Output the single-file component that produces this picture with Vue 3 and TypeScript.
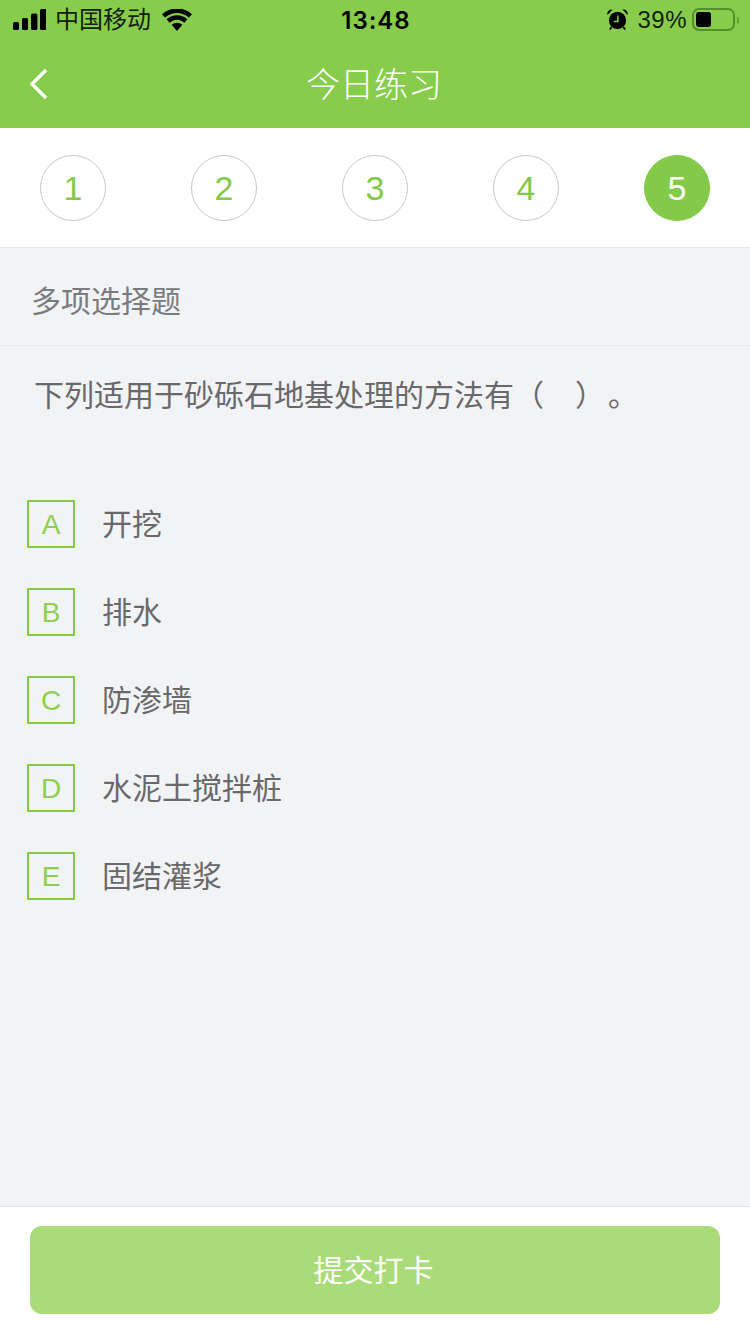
<script setup lang="ts">
const steps: number[] = [1, 2, 3, 4, 5]
const options = [
  { key: 'A', text: '开挖' },
  { key: 'B', text: '排水' },
  { key: 'C', text: '防渗墙' },
  { key: 'D', text: '水泥土搅拌桩' },
  { key: 'E', text: '固结灌浆' },
]
</script>

<template>
  <div class="page">
    <header class="top">
      <div class="status">
        <div class="status-left">
          <svg class="signal" width="33" height="21" viewBox="0 0 33 21">
            <rect x="0" y="13" width="6" height="8" rx="1.5" />
            <rect x="9" y="9" width="6" height="12" rx="1.5" />
            <rect x="18" y="4.5" width="6.4" height="16.5" rx="1.5" />
            <rect x="27" y="0" width="6.4" height="21" rx="1.5" />
          </svg>
          <span class="carrier">中国移动</span>
          <svg class="wifi" width="30" height="22" viewBox="0 0 30 22">
            <path d="M15 22 9.6 15.8a8 8 0 0 1 10.8 0Z" />
            <path d="M7.7 13.7 4.6 10.3a15.2 15.2 0 0 1 20.8 0l-3.1 3.4a10.8 10.8 0 0 0-14.6 0Z" />
            <path d="M3.2 8.7 0 5.3a22 22 0 0 1 30 0l-3.2 3.4a17.4 17.4 0 0 0-23.6 0Z" />
          </svg>
        </div>
        <span class="time">13:48</span>
        <div class="status-right">
          <svg class="alarm" width="21" height="21" viewBox="0 0 21 21">
            <circle cx="10.5" cy="11.4" r="8.6" fill="#000" />
            <path d="M.4 6C-.2 2.4 2 .2 5.6.6Z" fill="#000" />
            <path d="M20.6 6C21.2 2.4 19 .2 15.4.6Z" fill="#000" />
            <path d="M4.6 18 2.8 20.6M16.4 18l1.8 2.6" stroke="#000" stroke-width="1.8" fill="none" />
            <path d="M10.9 6.4V12.4H6.6" stroke="#87cd4b" stroke-width="1.5" fill="none" />
          </svg>
          <span class="pct">39%</span>
          <div class="battery"><i class="level"></i></div>
          <i class="cap"></i>
        </div>
      </div>
      <div class="nav">
        <svg class="back" width="20" height="32" viewBox="0 0 20 32">
          <path d="M17 2 3 16l14 14" fill="none" stroke="#fff" stroke-width="3.4" />
        </svg>
        <span class="title">今日练习</span>
      </div>
    </header>

    <section class="steps">
      <div v-for="n in steps" :key="n" class="step" :class="{ active: n === 5 }">{{ n }}</div>
    </section>

    <main class="body">
      <div class="type">多项选择题</div>
      <div class="question">下列适用于砂砾石地基处理的方法有（<span class="blank"></span><span class="close">）</span>。</div>
      <ul class="options">
        <li v-for="o in options" :key="o.key" class="option">
          <span class="letter">{{ o.key }}</span>
          <span class="label">{{ o.text }}</span>
        </li>
      </ul>
    </main>

    <footer class="foot">
      <button class="submit" type="button">提交打卡</button>
    </footer>
  </div>
</template>

<style>
html, body { margin: 0; padding: 0; }
</style>

<style scoped>
.page {
  width: 750px;
  height: 1334px;
  display: flex;
  flex-direction: column;
  background: #f2f3f5;
  font-family: "Liberation Sans", "Noto Sans CJK SC", sans-serif;
  overflow: hidden;
}
.top { height: 128px; background: #87cd4b; flex: none; }
.status {
  height: 40px;
  padding: 0 11px 0 13px;
  display: grid;
  grid-template-columns: 1fr auto 1fr;
  align-items: center;
  color: #000;
}
.status-left { display: flex; align-items: center; }
.signal { fill: #000; margin-top: -1px; }
.carrier { margin-left: 9px; font-size: 24px; line-height: 40px; color: #14210c; }
.wifi { fill: #000; margin-left: 11px; margin-top: -1px; }
.time { font-family: Inter, "Liberation Sans", sans-serif; font-size: 24px; font-weight: 600; letter-spacing: 1px; }
.status-right { display: flex; align-items: center; justify-content: flex-end; }
.alarm { margin-right: 9px; margin-top: -2px; }
.pct { font-size: 24px; letter-spacing: 0.5px; color: #14210c; margin-right: 5px; }
.battery {
  box-sizing: border-box;
  width: 43px;
  height: 23px;
  border: 2px solid #55902b;
  border-radius: 7px;
  padding: 2px;
  margin-top: -1px;
}
.level { display: block; width: 15px; height: 15px; background: #000; border-radius: 3px; }
.cap { display: block; width: 2px; height: 7px; margin-left: 2px; background: #5f9a35; border-radius: 0 2px 2px 0; }
.nav {
  height: 88px;
  position: relative;
  display: flex;
  align-items: center;
  justify-content: center;
}
.back { position: absolute; left: 29px; top: 28px; }
.title { font-size: 34px; color: #fff; font-weight: 300; margin: -3px 2px 0 0; }
.steps {
  flex: none;
  height: 119px;
  padding: 0 40px;
  background: #fff;
  border-bottom: 1px solid #e6e6e6;
  display: flex;
  align-items: center;
  justify-content: space-between;
}
.step {
  width: 66px;
  height: 66px;
  box-sizing: border-box;
  border: 1px solid #c9c9c9;
  border-radius: 50%;
  display: flex;
  align-items: center;
  justify-content: center;
  font-size: 34px;
  color: #84ca4a;
  margin-top: 1px;
}
.step.active { background: #84ca4a; border-color: #84ca4a; color: #fff; }
.body { flex: 1; min-height: 0; }
.type {
  height: 98px;
  box-sizing: border-box;
  padding: 5px 0 0 31px;
  border-bottom: 1px solid #e8e9eb;
  display: flex;
  align-items: center;
  font-size: 30px;
  color: #7a7b7d;
}
.question {
  padding: 30px 34px 0;
  font-size: 30px;
  line-height: 40px;
  color: #69696b;
}
.blank { display: inline-block; width: 31px; }
.close { margin-right: 18px; }
.options {
  list-style: none;
  margin: 0;
  padding: 84px 0 0 27px;
  display: flex;
  flex-direction: column;
  gap: 40px;
}
.option { display: flex; align-items: center; height: 48px; }
.letter {
  width: 48px;
  height: 48px;
  box-sizing: border-box;
  border: 2px solid #84ca4a;
  display: flex;
  align-items: center;
  justify-content: center;
  font-size: 28px;
  color: #8ccf52;
  padding-top: 2px;
}
.label { margin: -5px 0 0 27px; font-size: 30px; color: #69696b; }
.foot {
  flex: none;
  height: 128px;
  box-sizing: border-box;
  background: #fff;
  border-top: 1px solid #e8e9eb;
  padding: 19px 30px 0;
}
.submit {
  display: block;
  width: 100%;
  height: 88px;
  border: 0;
  border-radius: 12px;
  background: #a9dc78;
  color: #fff;
  font-family: inherit;
  font-size: 30px;
  padding: 0 3px 4px 0;
}
</style>
